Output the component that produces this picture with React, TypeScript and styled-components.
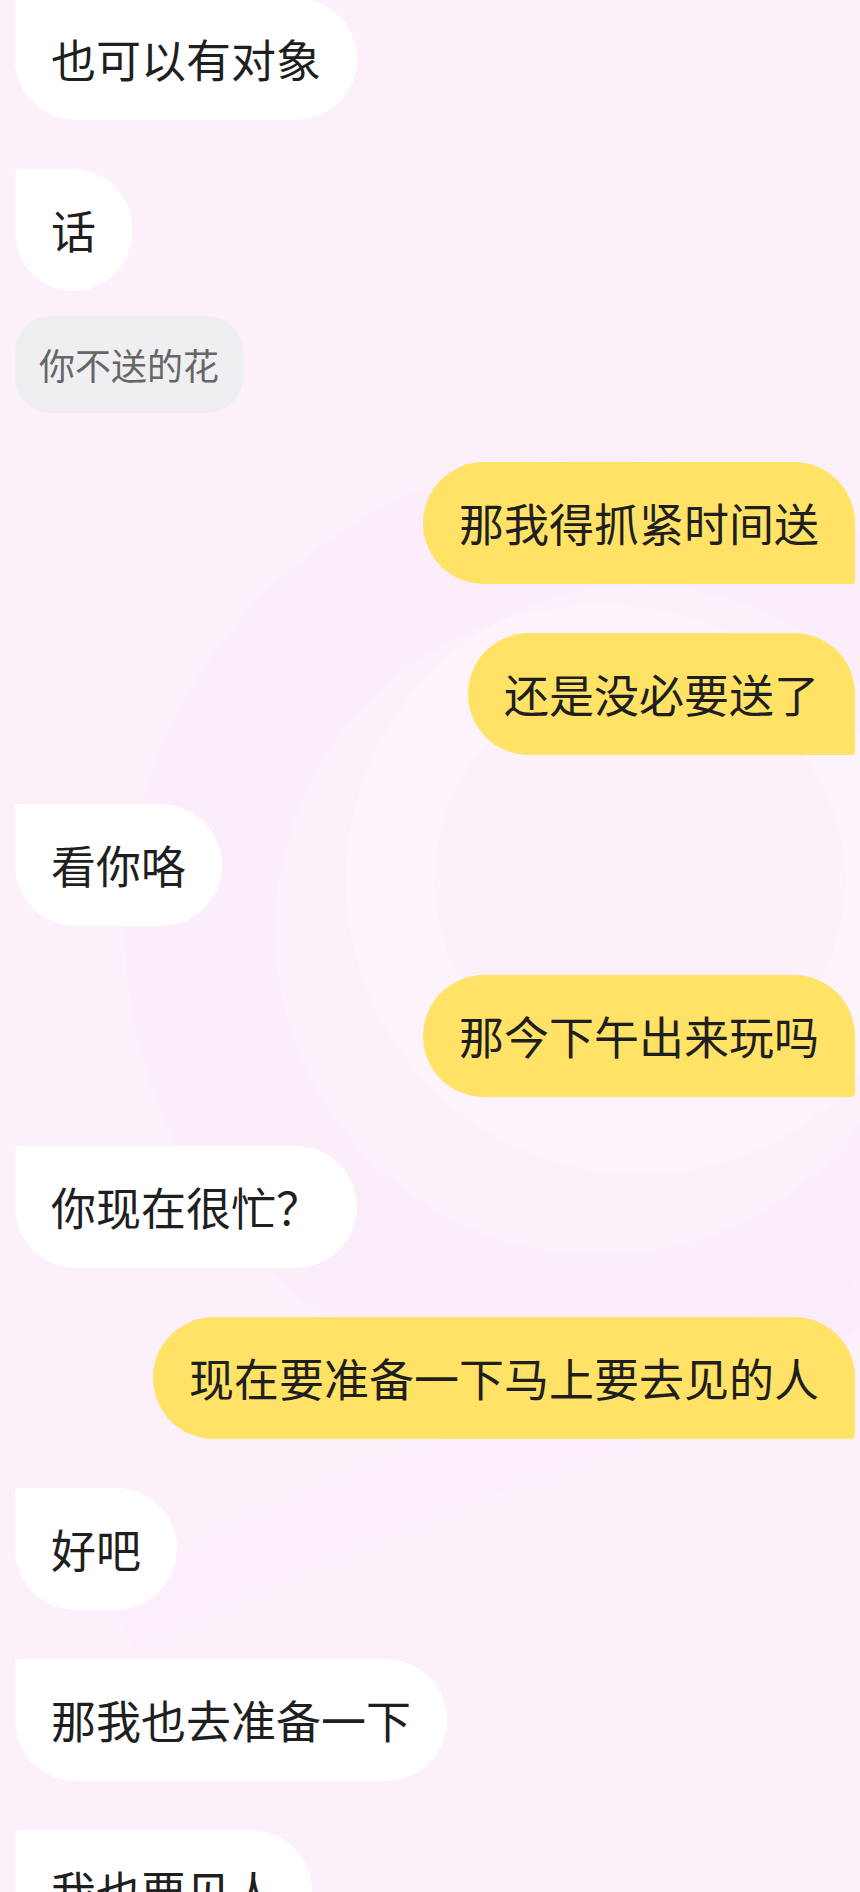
import React from "react";
import styled, { createGlobalStyle } from "styled-components";

const Global = createGlobalStyle`
  html, body {
    margin: 0;
    padding: 0;
    background: #fcf0fb;
    overflow: hidden;
  }
  body {
    font-family: "Noto Sans CJK SC", "Noto Sans", sans-serif;
  }
`;

const Screen = styled.div`
  position: relative;
  width: 860px;
  height: 1892px;
  overflow: hidden;
  background: #fcf0fb;
`;

const Backdrop = styled.svg`
  position: absolute;
  inset: 0;
  width: 860px;
  height: 1892px;
  z-index: 0;
  pointer-events: none;
`;

const Thread = styled.div`
  position: relative;
  z-index: 1;
  display: flex;
  flex-direction: column;
  gap: 49px;
  padding: 0 5px 0 15px;
  margin-top: -2px;
`;

const Group = styled.div`
  display: flex;
  flex-direction: column;
  align-items: flex-start;
  gap: 25px;
`;

const Row = styled.div<{ $mine?: boolean }>`
  display: flex;
  justify-content: ${(p) => (p.$mine ? "flex-end" : "flex-start")};
`;

const Bubble = styled.div<{ $mine?: boolean }>`
  box-sizing: border-box;
  padding: 31px 36px;
  font-size: 45px;
  line-height: 60px;
  color: #1f1f1f;
  white-space: nowrap;
  background: ${(p) => (p.$mine ? "#ffe266" : "#ffffff")};
  border-radius: ${(p) => (p.$mine ? "61px 61px 4px 61px" : "4px 61px 61px 61px")};
`;

const Quote = styled.div`
  box-sizing: border-box;
  padding: 24px 24px;
  font-size: 36px;
  line-height: 49px;
  color: #666666;
  white-space: nowrap;
  background: #efeff1;
  border-radius: 36px;
`;

type Msg = { text: string; mine?: boolean; quote?: string };

const messages: Msg[] = [
  { text: "也可以有对象" },
  { text: "话", quote: "你不送的花" },
  { text: "那我得抓紧时间送", mine: true },
  { text: "还是没必要送了", mine: true },
  { text: "看你咯" },
  { text: "那今下午出来玩吗", mine: true },
  { text: "你现在很忙？" },
  { text: "现在要准备一下马上要去见的人", mine: true },
  { text: "好吧" },
  { text: "那我也去准备一下" },
  { text: "我也要见人" },
];

export default function App() {
  return (
    <>
      <Global />
      <Screen>
        <Backdrop viewBox="0 0 860 1892" aria-hidden="true">
          <circle cx="600" cy="930" r="400" fill="none" stroke="#fae8f8" strokeWidth="150" opacity="0.45" />
          <circle cx="640" cy="880" r="250" fill="none" stroke="#fdf6fc" strokeWidth="90" opacity="0.5" />
          <path d="M120 1620 C 380 1480, 640 1420, 860 1300" fill="none" stroke="#fbeaf8" strokeWidth="70" opacity="0.35" />
        </Backdrop>
        <Thread>
          {messages.map((m, i) =>
            m.quote ? (
              <Group key={i}>
                <Bubble>{m.text}</Bubble>
                <Quote>{m.quote}</Quote>
              </Group>
            ) : (
              <Row key={i} $mine={m.mine}>
                <Bubble $mine={m.mine}>{m.text}</Bubble>
              </Row>
            )
          )}
        </Thread>
      </Screen>
    </>
  );
}
